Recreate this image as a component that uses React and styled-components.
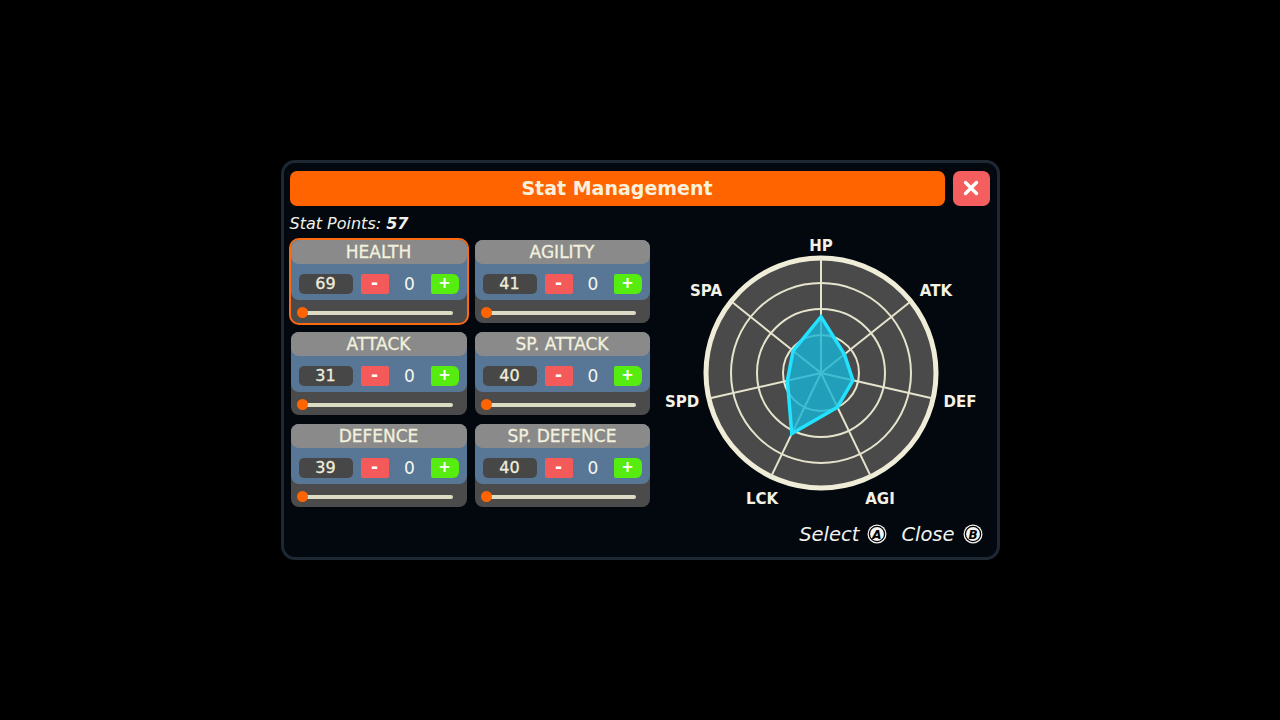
import styled, { createGlobalStyle } from "styled-components"

const GlobalStyle = createGlobalStyle`
  html, body {
    margin: 0;
    background: #000;
  }
  body {
    font-family: "DejaVu Sans", "Liberation Sans", sans-serif;
  }
`

const stats = [
  { name: "HEALTH", value: 69, selected: true },
  { name: "AGILITY", value: 41 },
  { name: "ATTACK", value: 31 },
  { name: "SP. ATTACK", value: 40 },
  { name: "DEFENCE", value: 39 },
  { name: "SP. DEFENCE", value: 40 },
]

// radar axes: value is a fraction of the outer radius, lx/ly is the label offset from centre
const axes = [
  { label: "HP", value: 0.49, lx: 0, ly: -128 },
  { label: "ATK", value: 0.26, lx: 115, ly: -83 },
  { label: "DEF", value: 0.285, lx: 139, ly: 28 },
  { label: "AGI", value: 0.33, lx: 59, ly: 125 },
  { label: "LCK", value: 0.585, lx: -59, ly: 125 },
  { label: "SPD", value: 0.3, lx: -139, ly: 28 },
  { label: "SPA", value: 0.31, lx: -115, ly: -83 },
]

function App() {
  return (
    <>
      <GlobalStyle />
      <Screen>
        <Panel>
          <TitleRow>
            <TitleBar>Stat Management</TitleBar>
            <CloseButton>
              <svg width="16" height="16" viewBox="0 0 16 16">
                <path d="M2.5 2.5 L13.5 13.5 M13.5 2.5 L2.5 13.5" stroke="#fff" strokeWidth="3.4" strokeLinecap="round" />
              </svg>
            </CloseButton>
          </TitleRow>
          <PointsLine>
            Stat Points: <b>57</b>
          </PointsLine>
          <Body>
            <CardGrid>
              {stats.map((s) => (
                <StatCard key={s.name} stat={s} />
              ))}
            </CardGrid>
            <RadarChart />
          </Body>
          <Footer>
            <Hint>
              Select <PadIcon letter="A" />
            </Hint>
            <Hint>
              Close <PadIcon letter="B" />
            </Hint>
          </Footer>
        </Panel>
      </Screen>
    </>
  )
}

export default App

function StatCard({ stat }) {
  return (
    <Card $selected={stat.selected}>
      <Top>
        <CardHeader>{stat.name}</CardHeader>
        <Controls>
          <ValueBox>{stat.value}</ValueBox>
          <StepButton $kind="minus">-</StepButton>
          <Added>0</Added>
          <StepButton $kind="plus">+</StepButton>
        </Controls>
      </Top>
      <SliderRow>
        <Track>
          <Knob />
        </Track>
      </SliderRow>
    </Card>
  )
}

function RadarChart() {
  const cx = 163
  const cy = 133
  const R = 115
  const step = (Math.PI * 2) / axes.length
  const pt = (i, r) => {
    const a = i * step
    return [cx + Math.sin(a) * r, cy - Math.cos(a) * r]
  }
  const poly = axes.map((ax, i) => pt(i, ax.value * R).join(",")).join(" ")

  return (
    <ChartBox>
      <svg width="332" height="267" viewBox="0 0 332 267" overflow="visible">
        <circle cx={cx} cy={cy} r={R} fill="#4a4a4a" stroke="#efedd8" strokeWidth="5" />
        {[38, 64, 90].map((r) => (
          <circle key={r} cx={cx} cy={cy} r={r} fill="none" stroke="#e6e4cc" strokeWidth="2" />
        ))}
        {axes.map((ax, i) => {
          const [x, y] = pt(i, R)
          return <line key={ax.label} x1={cx} y1={cy} x2={x} y2={y} stroke="#e6e4cc" strokeWidth="2" />
        })}
        <polygon points={poly} fill="#17b4d6" fillOpacity="0.8" stroke="#22e2ff" strokeWidth="3.5" strokeLinejoin="miter" />
        {axes.map((ax) => (
          <AxisLabel key={ax.label} x={cx + ax.lx} y={cy + ax.ly + 1} textAnchor="middle" dominantBaseline="central">
            {ax.label}
          </AxisLabel>
        ))}
      </svg>
    </ChartBox>
  )
}

function PadIcon({ letter }) {
  return (
    <svg width="20" height="20" viewBox="0 0 20 20">
      <circle cx="10" cy="10" r="9.5" fill="#f4f4f4" />
      <circle cx="10" cy="10" r="7.6" fill="none" stroke="#000" strokeWidth="1.3" />
      <text x="10" y="10.6" textAnchor="middle" dominantBaseline="central" fontSize="12" fontWeight="700" fontFamily="DejaVu Sans, sans-serif" fill="#000">
        {letter}
      </text>
    </svg>
  )
}

const Screen = styled.div`
  width: 1280px;
  height: 720px;
  display: flex;
  align-items: center;
  justify-content: center;
`

const Panel = styled.div`
  box-sizing: border-box;
  width: 719px;
  height: 400px;
  margin-top: -1px;
  border: 3px solid #1c2834;
  border-radius: 14px;
  background: #03080e;
  padding: 8px 7px 0 6px;
  display: flex;
  flex-direction: column;
`

const TitleRow = styled.div`
  display: flex;
  gap: 8px;
  height: 35px;
`

const TitleBar = styled.div`
  flex: 1;
  background: #ff6400;
  border-radius: 7px;
  color: #f9f1dc;
  font-weight: 700;
  font-size: 19px;
  display: flex;
  align-items: center;
  justify-content: center;
`

const CloseButton = styled.div`
  width: 37px;
  background: #f45e5e;
  border-radius: 7px;
  display: flex;
  align-items: center;
  justify-content: center;
`

const PointsLine = styled.div`
  margin-top: 8px;
  height: 20px;
  line-height: 20px;
  font-size: 16px;
  font-style: italic;
  color: #f2f0e6;

  b {
    font-weight: 700;
  }
`

const Body = styled.div`
  display: flex;
  margin-top: 6px;
  padding-left: 1px;
  gap: 8px;
`

const CardGrid = styled.div`
  display: grid;
  grid-template-columns: 176px 175px;
  grid-auto-rows: 83px;
  column-gap: 8px;
  row-gap: 9px;
`

const Card = styled.div`
  background: #4b4b4b;
  border-radius: 8px;
  display: flex;
  flex-direction: column;
  box-shadow: ${(p) => (p.$selected ? "0 0 0 2px #ff6a10" : "none")};
`

const Top = styled.div`
  background: #587796;
  border-radius: 8px;
  height: 60px;
  display: flex;
  flex-direction: column;
`

const CardHeader = styled.div`
  height: 24px;
  background: #8a8a8a;
  border-radius: 8px;
  color: #f3f1de;
  font-size: 17px;
  -webkit-text-stroke: 0.3px #f3f1de;
  display: flex;
  align-items: center;
  justify-content: center;
  padding-top: 1px;
  box-sizing: border-box;
`

const Controls = styled.div`
  display: flex;
  align-items: center;
  padding: 10px 8px 0 8px;
  gap: 8px;
`

const ValueBox = styled.div`
  width: 54px;
  height: 20px;
  background: #474747;
  border-radius: 5px;
  color: #efeddc;
  font-size: 16px;
  -webkit-text-stroke: 0.3px #efeddc;
  display: flex;
  align-items: center;
  justify-content: center;
`

const StepButton = styled.div`
  width: 28px;
  height: 20px;
  background: ${(p) => (p.$kind === "plus" ? "#56ec10" : "#f45a5a")};
  border-radius: ${(p) => (p.$kind === "plus" ? "2px 6px 6px 2px" : "2px")};
  color: #fff;
  font-weight: 700;
  font-size: ${(p) => (p.$kind === "plus" ? "15px" : "17px")};
  display: flex;
  align-items: center;
  justify-content: center;
  line-height: 1;
`

const Added = styled.div`
  flex: 1;
  text-align: center;
  color: #f6f6f0;
  font-size: 17px;
`

const SliderRow = styled.div`
  flex: 1;
  display: flex;
  align-items: center;
  padding: 3px 14px 0 10px;
`

const Track = styled.div`
  position: relative;
  flex: 1;
  height: 4px;
  border-radius: 2px;
  background: #dcdbc4;
`

const Knob = styled.div`
  position: absolute;
  left: -4px;
  top: -4px;
  width: 11px;
  height: 11px;
  border-radius: 50%;
  background: #ff6400;
`

const ChartBox = styled.div`
  width: 332px;
  height: 267px;
`

const AxisLabel = styled.text`
  fill: #f4f2e6;
  font-size: 15px;
  font-weight: 700;
  font-family: "DejaVu Sans", sans-serif;
`

const Footer = styled.div`
  display: flex;
  justify-content: flex-end;
  gap: 14px;
  margin-top: 16px;
  padding-right: 7px;
`

const Hint = styled.div`
  display: flex;
  align-items: center;
  gap: 8px;
  color: #f2f2ee;
  font-size: 19.5px;
  font-style: italic;
`
